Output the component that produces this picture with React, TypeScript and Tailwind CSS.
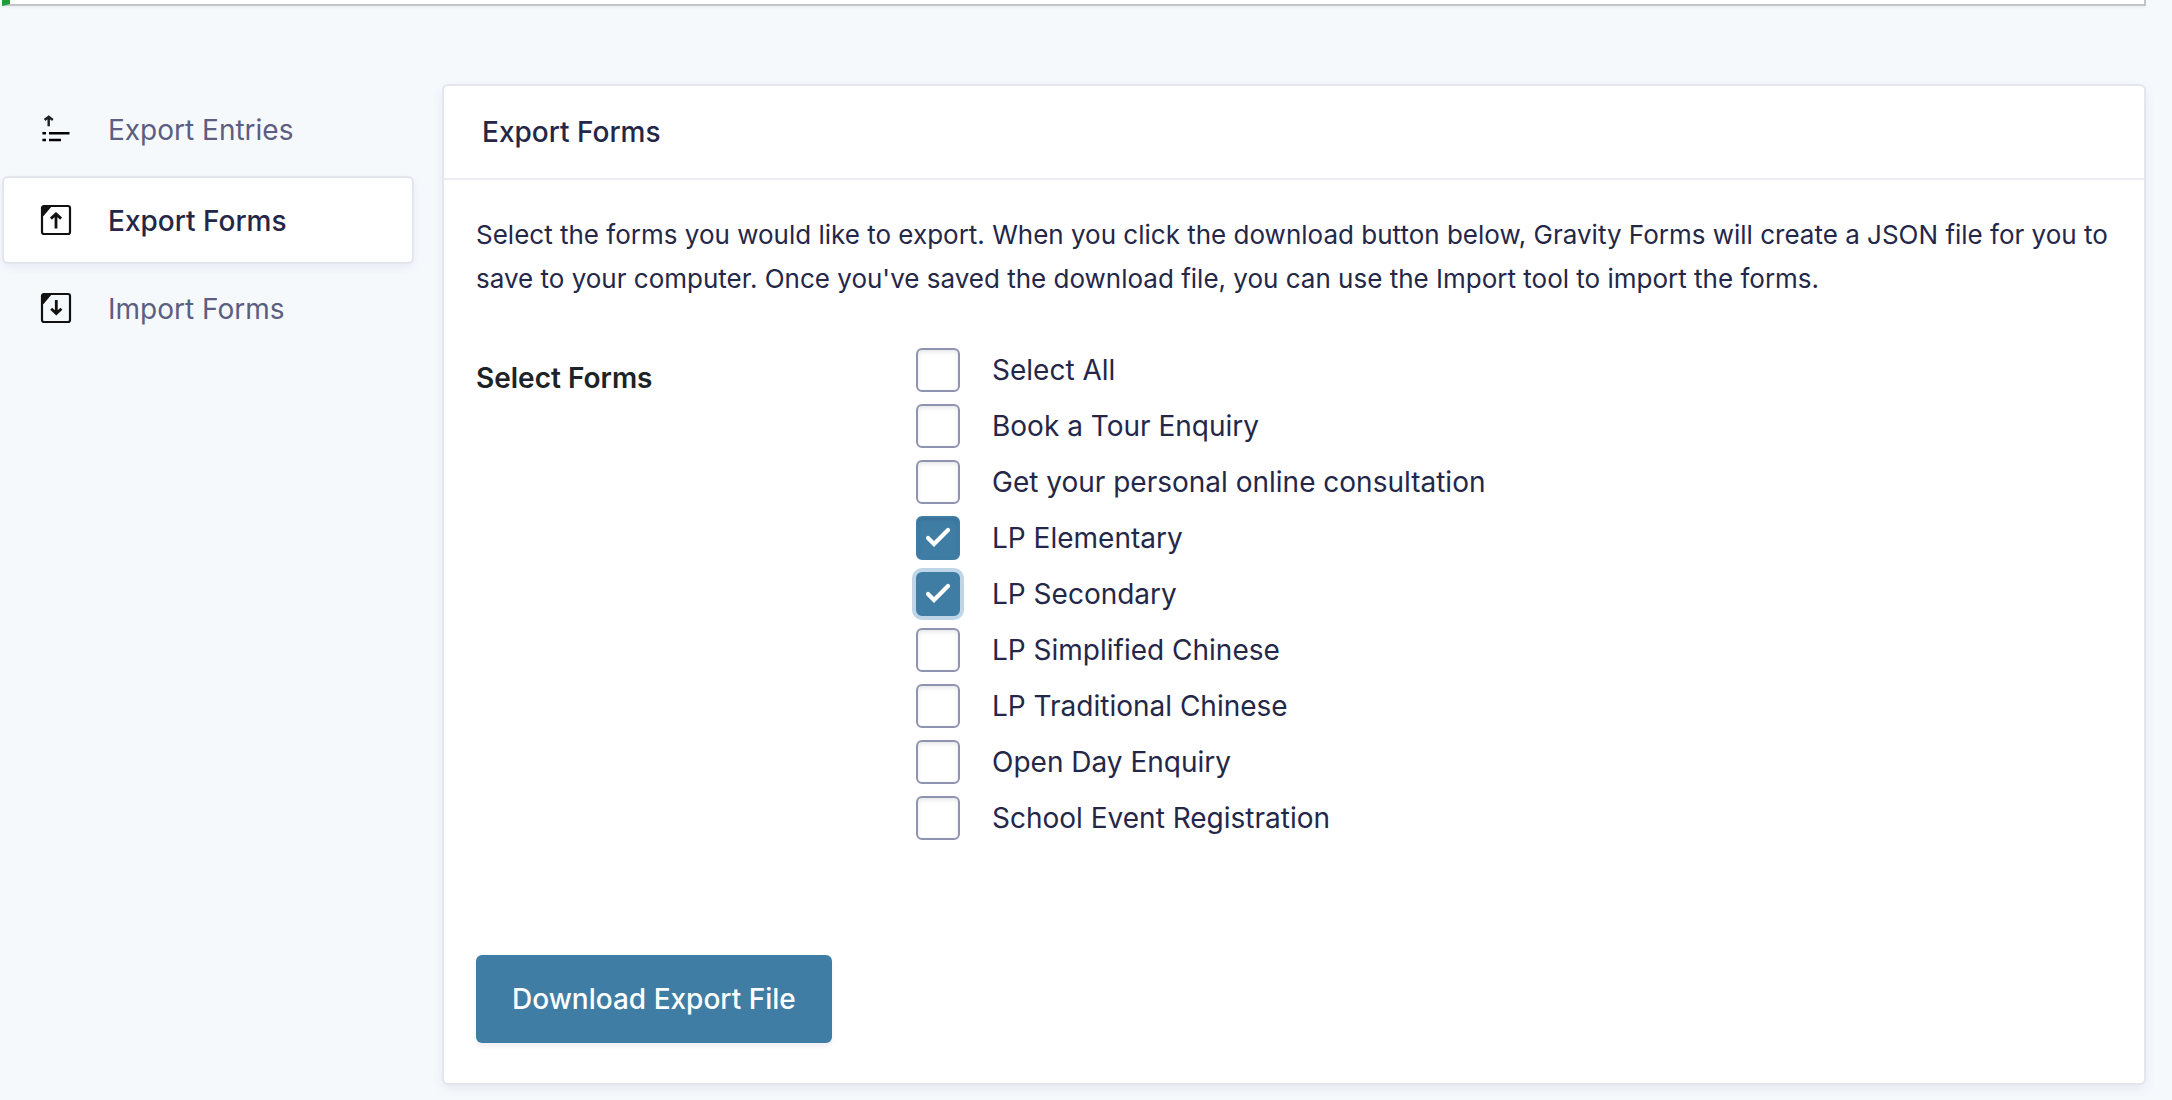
import { useState } from "react";

const FORMS = [
  "Select All",
  "Book a Tour Enquiry",
  "Get your personal online consultation",
  "LP Elementary",
  "LP Secondary",
  "LP Simplified Chinese",
  "LP Traditional Chinese",
  "Open Day Enquiry",
  "School Event Registration",
];

function EntriesIcon() {
  return (
    <svg className="size-8" viewBox="0 0 32 32" fill="none" aria-hidden="true">
      <path d="M4.6 6 L8.7 2.7 L12.8 6 M8.7 3 V12.2" stroke="#1d1f20" strokeWidth="2.4" />
      <path d="M2.4 19.3 H6 M9 19.3 H29.5 M2.4 26 H6 M9 26 H21" stroke="#000" strokeWidth="2.5" />
    </svg>
  );
}

function FormIcon({ down = false }: { down?: boolean }) {
  return (
    <svg className="size-8" viewBox="0 0 32 32" fill="none" aria-hidden="true">
      <rect x="2" y="2" width="28" height="28" rx="2" stroke="#111" strokeWidth="2.2" />
      <path d="M2 2 H12 L3.5 12 H2 Z" fill="#111" />
      {down ? (
        <path d="M16.3 8 V21.5 M11.2 16.8 L16.3 21.5 L21.4 16.8" stroke="#111" strokeWidth="2.8" />
      ) : (
        <path d="M16 24.6 V10 M10.9 14.6 L16 9.9 L21.1 14.6" stroke="#111" strokeWidth="2.8" />
      )}
    </svg>
  );
}

export default function App() {
  const [checked, setChecked] = useState<string[]>(["LP Elementary", "LP Secondary"]);
  const toggle = (name: string) =>
    setChecked((list) => (list.includes(name) ? list.filter((n) => n !== name) : [...list, name]));

  return (
    <div className="min-h-screen bg-[#f6f9fc] pr-[26px] pl-0.5 font-['Inter',sans-serif] text-[#242748]">
      <div className="h-1.5 border-r-2 border-b-2 border-l-8 border-[#c3c4c7] border-l-[#1aa035] bg-white shadow-[0_2px_2px_rgba(0,0,0,0.04)]" />
      <div className="flex items-start gap-7 pt-[78px]">
        <nav className="w-[412px] shrink-0 pt-0.5 text-[28px] leading-9">
          <a href="#entries" className="mb-0.5 flex h-[88px] items-center gap-9 rounded-md border-2 border-transparent px-9 text-[#5b5e80]">
            <EntriesIcon />
            <span>Export Entries</span>
          </a>
          <a
            href="#export"
            aria-current="page"
            className="flex h-[88px] items-center gap-9 rounded-md border-2 border-[#e3e5ef] bg-white px-9 font-medium shadow-[0_4px_8px_rgba(18,25,97,0.06)]"
          >
            <FormIcon />
            <span className="pt-0.5">Export Forms</span>
          </a>
          <a href="#import" className="flex h-[88px] items-center gap-9 rounded-md border-2 border-transparent px-9 text-[#5b5e80]">
            <FormIcon down />
            <span className="pt-0.5">Import Forms</span>
          </a>
        </nav>

        <main className="min-w-0 flex-1 rounded-md border-2 border-[#e3e5ef] bg-white shadow-[0_4px_12px_rgba(18,25,97,0.07)]">
          <header className="border-b-2 border-[#ebebf2] px-[38px] py-7">
            <h1 className="text-[28px] leading-9 font-medium">Export Forms</h1>
          </header>
          <form className="px-8 pt-[33px] pb-10" onSubmit={(e) => e.preventDefault()}>
            <p className="text-[26px] leading-[44px]">
              Select the forms you would like to export. When you click the download button below, Gravity Forms will
              create a JSON file for you to save to your computer. Once you've saved the download file, you can use the
              Import tool to import the forms.
            </p>
            <fieldset className="mt-[47px] flex" aria-labelledby="select-forms">
              <div id="select-forms" className="w-[440px] shrink-0 pt-3 text-[28px] leading-9 font-semibold text-[#1d2327]">
                Select Forms
              </div>
              <div className="flex flex-col items-start gap-3">
                {FORMS.map((name) => (
                  <label key={name} className="flex items-center gap-8 text-[28px] leading-[44px]">
                    <span className="grid size-11 place-items-center">
                      <input
                        type="checkbox"
                        checked={checked.includes(name)}
                        autoFocus={name === "LP Secondary"}
                        onChange={() => toggle(name)}
                        className="peer col-start-1 row-start-1 size-11 appearance-none rounded-md border-2 border-[#9092b2] bg-white shadow-[inset_0_2px_4px_rgba(0,0,0,0.1)] outline-none checked:border-[#407da5] checked:bg-[#407da5] focus:shadow-[0_0_0_4px_#bfd6e9]"
                      />
                      <svg
                        className="pointer-events-none invisible col-start-1 row-start-1 size-11 peer-checked:visible"
                        viewBox="0 0 44 44"
                        fill="none"
                        aria-hidden="true"
                      >
                        <path d="M12 22 L18 28 L32 14" stroke="#fff" strokeWidth="4.2" strokeLinecap="round" />
                      </svg>
                    </span>
                    {name}
                  </label>
                ))}
              </div>
            </fieldset>
            <button
              type="submit"
              className="mt-[115px] h-[88px] rounded-md bg-[#407da5] px-9 text-[28px] leading-9 font-medium text-white shadow-[0_4px_4px_rgba(18,25,97,0.06)]"
            >
              Download Export File
            </button>
          </form>
        </main>
      </div>
    </div>
  );
}
